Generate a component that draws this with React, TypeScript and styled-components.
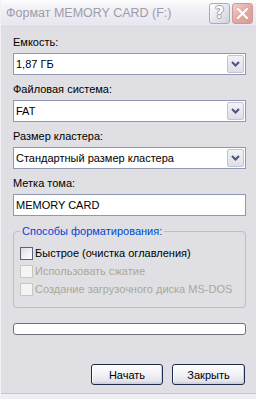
import React from "react";
import styled, { createGlobalStyle } from "styled-components";

const Global = createGlobalStyle`
  html, body { margin: 0; padding: 0; background: #ffffff; }
  body { font-family: "Liberation Sans", Arial, sans-serif; font-size: 11px; color: #000; }
  * { box-sizing: border-box; }
`;

const Window = styled.div`
  width: 256px;
  height: 399px;
  display: flex;
  flex-direction: column;
  background: #e0dfe3;
  border-left: 1px solid #f2f2f6;
  overflow: hidden;
`;

const TitleBar = styled.div`
  height: 27px;
  flex: none;
  display: flex;
  align-items: center;
  padding: 0 3px 0 5px;
  background: linear-gradient(#fdfdfe 0%, #f0f0f5 35%, #e6e6ed 100%);
  border-bottom: 1px solid #d8d8e2;
`;

const Title = styled.div`
  flex: 1;
  font-family: "Liberation Sans", Arial, sans-serif;
  font-size: 12.5px;
  color: #9c9cae;
  white-space: nowrap;
`;

const CaptionButton = styled.div<{ $close?: boolean }>`
  width: 21px;
  height: 21px;
  margin-left: 2px;
  border-radius: 3px;
  display: flex;
  align-items: center;
  justify-content: center;
  border: 1px solid ${(p) => (p.$close ? "#c99a9a" : "#a9a9bc")};
  background: ${(p) =>
    p.$close
      ? "linear-gradient(135deg, #f2cfc9 0%, #e3aaa2 50%, #d99b93 100%)"
      : "linear-gradient(135deg, #ffffff 0%, #e6e6ee 50%, #d2d2de 100%)"};
`;

const HelpGlyph = styled.span`
  font-family: "DejaVu Sans", sans-serif;
  font-weight: bold;
  font-size: 15px;
  line-height: 1;
  color: #ffffff;
  text-shadow: 1px 0 0 #9d9db0, -1px 0 0 #9d9db0, 0 1px 0 #9d9db0, 0 -1px 0 #9d9db0;
`;

const Content = styled.div`
  flex: 1;
  display: flex;
  flex-direction: column;
  padding: 9px 10px 0 12px;
`;

const Label = styled.div<{ $first?: boolean }>`
  height: 13px;
  line-height: 13px;
  margin-top: ${(p) => (p.$first ? "0" : "8px")};
  margin-bottom: 4px;
`;

const Combo = styled.div`
  height: 22px;
  display: flex;
  align-items: stretch;
  background: #ffffff;
  border: 1px solid #8f97b3;
`;

const ComboText = styled.div`
  flex: 1;
  display: flex;
  align-items: center;
  padding-left: 2px;
  white-space: nowrap;
`;

const DropButton = styled.div`
  width: 17px;
  margin: 1px;
  display: flex;
  align-items: center;
  justify-content: center;
  border: 1px solid #c2c4d4;
  border-radius: 2px;
  background: linear-gradient(#f2f2f7, #dedee8);
`;

const TextBox = styled.div`
  height: 22px;
  display: flex;
  align-items: center;
  padding-left: 2px;
  background: #ffffff;
  border: 1px solid #8f97b3;
`;

const Group = styled.fieldset`
  margin: 9px 0 0 0;
  padding: 6px 8px 9px 6px;
  border: 1px solid #bcbccb;
  border-radius: 4px;
  min-width: 0;
`;

const Legend = styled.legend`
  padding: 0 2px;
  color: #0046d5;
  line-height: 13px;
`;

const CheckRow = styled.div<{ $disabled?: boolean }>`
  height: 18px;
  display: flex;
  align-items: center;
  gap: 2px;
  color: ${(p) => (p.$disabled ? "#aca899" : "#000")};
  white-space: nowrap;
`;

const Box = styled.div<{ $disabled?: boolean }>`
  width: 13px;
  height: 13px;
  flex: none;
  border: 1px solid ${(p) => (p.$disabled ? "#cac8bb" : "#5a6478")};
  background: ${(p) =>
    p.$disabled ? "#f4f4f4" : "linear-gradient(135deg, #dcdce2 0%, #f3f3f6 60%, #ffffff 100%)"};
`;

const Progress = styled.div`
  margin-top: 15px;
  height: 12px;
  background: #ffffff;
  border: 1px solid #6f6f78;
  border-radius: 3px;
`;

const Buttons = styled.div`
  margin-top: 29px;
  margin-right: 1px;
  display: flex;
  justify-content: flex-end;
  gap: 9px;
`;

const Button = styled.div<{ $w: number }>`
  width: ${(p) => p.$w}px;
  height: 21px;
  display: flex;
  align-items: center;
  justify-content: center;
  border: 1px solid #1c2c4c;
  border-radius: 3px;
  background: linear-gradient(#ffffff 0%, #f4f4f8 40%, #e4e4ec 85%, #c9c9d6 100%);
  box-shadow: inset -1px -1px 0 #d0d0dc, inset 1px 1px 0 #ffffff;
`;

const BottomFrame = styled.div`
  height: 6px;
  flex: none;
  border-top: 1px solid #c4c4d2;
  background: #eeeef4;
`;

const Chevron = () => (
  <svg width="9" height="6" viewBox="0 0 9 6">
    <path d="M1 1 L4.5 4.5 L8 1" fill="none" stroke="#4b5873" strokeWidth="2" />
  </svg>
);

const CloseX = () => (
  <svg width="11" height="11" viewBox="0 0 11 11">
    <path d="M1 1 L10 10 M10 1 L1 10" stroke="#ffffff" strokeWidth="2" strokeLinecap="square" />
  </svg>
);

const ComboBox = ({ value }: { value: string }) => (
  <Combo>
    <ComboText>{value}</ComboText>
    <DropButton>
      <Chevron />
    </DropButton>
  </Combo>
);

export default function App() {
  return (
    <>
      <Global />
      <Window>
        <TitleBar>
          <Title>Формат MEMORY CARD (F:)</Title>
          <CaptionButton>
            <HelpGlyph>?</HelpGlyph>
          </CaptionButton>
          <CaptionButton $close>
            <CloseX />
          </CaptionButton>
        </TitleBar>
        <Content>
          <Label $first>Емкость:</Label>
          <ComboBox value="1,87 ГБ" />
          <Label>Файловая система:</Label>
          <ComboBox value="FAT" />
          <Label>Размер кластера:</Label>
          <ComboBox value="Стандартный размер кластера" />
          <Label>Метка тома:</Label>
          <TextBox>MEMORY CARD</TextBox>
          <Group>
            <Legend>Способы форматирования:</Legend>
            <CheckRow>
              <Box />
              Быстрое (очистка оглавления)
            </CheckRow>
            <CheckRow $disabled>
              <Box $disabled />
              Использовать сжатие
            </CheckRow>
            <CheckRow $disabled>
              <Box $disabled />
              Создание загрузочного диска MS-DOS
            </CheckRow>
          </Group>
          <Progress />
          <Buttons>
            <Button $w={72}>Начать</Button>
            <Button $w={73}>Закрыть</Button>
          </Buttons>
        </Content>
        <BottomFrame />
      </Window>
    </>
  );
}
